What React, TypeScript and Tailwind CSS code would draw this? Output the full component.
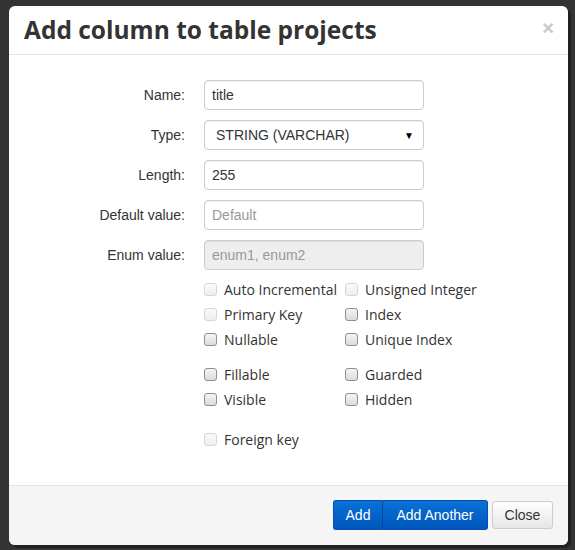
const sans = "font-['Liberation_Sans',Arial,sans-serif]";
const open = "font-['Open_Sans','Noto_Sans',sans-serif]";

function Field({ label, children }: { label: string; children: React.ReactNode }) {
  return (
    <div className="flex items-center h-[30px]">
      <label className={`${sans} w-[176px] text-right text-[14px] text-[#333]`}>{label}</label>
      <div className="ml-[19px] w-[220px] h-[30px]">{children}</div>
    </div>
  );
}

function Check({ label, disabled }: { label: string; disabled?: boolean }) {
  return (
    <div className="flex items-center h-[25px]">
      <span
        className={
          disabled
            ? "w-[13px] h-[13px] rounded-[3px] border border-[#d6d6d6] bg-gradient-to-b from-[#fafafa] to-[#eeeeee]"
            : "w-[13px] h-[13px] rounded-[3px] border border-[#8f8f8f] bg-gradient-to-b from-[#f4f4f4] to-[#dcdcdc]"
        }
      />
      <span className={`${open} ml-[7px] text-[14px] text-[#333] whitespace-nowrap`}>{label}</span>
    </div>
  );
}

export default function App() {
  const input =
    "w-full h-full rounded-[4px] border border-[#ccc] px-[7px] text-[14px] text-[#333] outline-none shadow-[inset_0_1px_1px_rgba(0,0,0,0.075)]";
  return (
    <div className="w-[575px] h-[550px] bg-[#333] pt-[6px] pl-[9px]">
      <div className="w-[559px] h-[539px] bg-white rounded-[6px] flex flex-col shadow-[3px_3px_0_rgba(0,0,0,0.35)]">
        <div className="h-[49px] border-b border-[#e5e5e5] flex items-center justify-between pl-[15px] pr-[14px] shrink-0">
          <h4 className={`${open} font-bold text-[24.5px] text-[#333] leading-none`}>
            Add column to table projects
          </h4>
          <span className={`${sans} text-[20px] font-bold text-[#c8c8c8] leading-none -mt-[5px]`}>×</span>
        </div>

        <div className="flex-1 pt-[25px] flex flex-col">
          <div className="flex flex-col gap-[10px]">
            <Field label="Name:">
              <input className={`${input} ${sans}`} defaultValue="title" />
            </Field>
            <Field label="Type:">
              <div className={`${input} ${sans} flex items-center justify-between pl-[11px] pr-[9px]`}>
                <span>STRING (VARCHAR)</span>
                <span className="text-[10px] text-black">▼</span>
              </div>
            </Field>
            <Field label="Length:">
              <input className={`${input} ${sans}`} defaultValue="255" />
            </Field>
            <Field label="Default value:">
              <input className={`${input} ${sans} placeholder:text-[#999]`} placeholder="Default" />
            </Field>
            <Field label="Enum value:">
              <input
                className={`${input} ${sans} bg-[#eee] placeholder:text-[#999]`}
                placeholder="enum1, enum2"
                disabled
              />
            </Field>
          </div>

          <div className="ml-[195px] mt-[7px] grid grid-cols-[141px_1fr]">
            <Check label="Auto Incremental" disabled />
            <Check label="Unsigned Integer" disabled />
            <Check label="Primary Key" disabled />
            <Check label="Index" />
            <Check label="Nullable" />
            <Check label="Unique Index" />
          </div>
          <div className="ml-[195px] mt-[10px] grid grid-cols-[141px_1fr]">
            <Check label="Fillable" />
            <Check label="Guarded" />
            <Check label="Visible" />
            <Check label="Hidden" />
          </div>
          <div className="ml-[195px] mt-[15px]">
            <Check label="Foreign key" disabled />
          </div>
        </div>

        <div className="h-[60px] shrink-0 border-t border-[#e5e5e5] bg-[#f5f5f5] rounded-b-[6px] flex justify-end items-start pt-[14px] pr-[15px]">
          <div className={`${sans} flex h-[30px] text-[14px] text-white`}>
            <button className="w-[50px] rounded-l-[3px] border border-[#0050b0] border-r-[#004aa0] bg-gradient-to-b from-[#0a71d8] to-[#0056bc]">
              Add
            </button>
            <button className="w-[105px] rounded-r-[3px] border border-l-0 border-[#0050b0] bg-gradient-to-b from-[#0a71d8] to-[#0056bc]">
              Add Another
            </button>
          </div>
          <button
            className={`${sans} ml-[4px] mt-[1px] w-[61px] h-[28px] rounded-[3px] border border-[#ccc] bg-gradient-to-b from-white to-[#e6e6e6] text-[14px] text-[#333]`}
          >
            Close
          </button>
        </div>
      </div>
    </div>
  );
}
